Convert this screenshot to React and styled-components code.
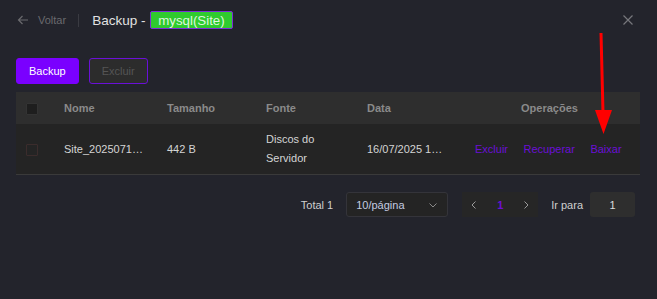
import React from 'react'
import styled, { createGlobalStyle } from 'styled-components';

const GlobalStyle = createGlobalStyle`
  html, body {
    margin: 0;
    padding: 0;
    background: #23242c;
    font-family: "Liberation Sans", Arial, sans-serif;
  }
`;

const rows = [
  {
    name: 'Site_20250716_153012.sql.gz',
    size: '442 B',
    source: 'Discos do Servidor',
    date: '16/07/2025 15:30:12',
  },
];

export default function App() {
  return (
    <Page>
      <GlobalStyle />
      <Header>
        <Back>
          <svg width="12" height="12" viewBox="0 0 12 12" fill="none" stroke="currentColor" strokeWidth="1.2">
            <path d="M11 6H1.5M5.5 2 1.5 6l4 4" />
          </svg>
          Voltar
        </Back>
        <Divider />
        <Title>Backup - </Title>
        <Tag>mysql(Site)</Tag>
        <Close>
          <svg width="10" height="10" viewBox="0 0 10 10" stroke="currentColor" strokeWidth="1.2">
            <path d="M0.5 0.5l9 9M9.5 0.5l-9 9" />
          </svg>
        </Close>
      </Header>

      <Toolbar>
        <Button $primary>Backup</Button>
        <Button>Excluir</Button>
      </Toolbar>

      <Table>
        <colgroup>
          <col style={{ width: 32 }} />
          <col style={{ width: 103 }} />
          <col style={{ width: 99 }} />
          <col style={{ width: 101 }} />
          <col style={{ width: 108 }} />
          <col style={{ width: 181 }} />
        </colgroup>
        <thead>
          <tr>
            <Th $check><Check $head /></Th>
            <Th>Nome</Th>
            <Th>Tamanho</Th>
            <Th>Fonte</Th>
            <Th>Data</Th>
            <Th $center>Operações</Th>
          </tr>
        </thead>
        <tbody>
          {rows.map((r) => (
            <tr key={r.name}>
              <Td $check><Check /></Td>
              <Td $ellipsis $pr={6}>{r.name}</Td>
              <Td>{r.size}</Td>
              <Td>{r.source}</Td>
              <Td $ellipsis>{r.date}</Td>
              <Td>
                <Ops>
                  <OpLink>Excluir</OpLink>
                  <OpLink>Recuperar</OpLink>
                  <OpLink>Baixar</OpLink>
                </Ops>
              </Td>
            </tr>
          ))}
        </tbody>
      </Table>

      <Pagination>
        <Label>Total 1</Label>
        <Select>
          10/página
          <svg width="10" height="10" viewBox="0 0 10 10" fill="none" stroke="currentColor" strokeWidth="1">
            <path d="M1.5 3.5 5 7l3.5-3.5" />
          </svg>
        </Select>
        <Pager>
          <PagerBtn>
            <svg width="8" height="10" viewBox="0 0 8 10" fill="none" stroke="currentColor" strokeWidth="1">
              <path d="M5.5 1.5 2 5l3.5 3.5" />
            </svg>
          </PagerBtn>
          <PageNum>1</PageNum>
          <PagerBtn>
            <svg width="8" height="10" viewBox="0 0 8 10" fill="none" stroke="currentColor" strokeWidth="1">
              <path d="M2.5 1.5 6 5 2.5 8.5" />
            </svg>
          </PagerBtn>
        </Pager>
        <Label $gap={7}>Ir para</Label>
        <JumpInput>1</JumpInput>
      </Pagination>

      <Annotation width="20" height="110" viewBox="0 0 20 110">
        <path d="M7 2 L9 82" stroke="#ff0000" strokeWidth="3" />
        <path d="M1 79 L18 79 L9.5 103 Z" fill="#ff0000" />
      </Annotation>
    </Page>
  )
}

const Page = styled.div`
  position: relative;
  width: 657px;
  height: 299px;
  box-sizing: border-box;
  padding: 0 17px 0 16px;
  background: #23242c;
  font-size: 11px;
`;

const Header = styled.div`
  display: flex;
  align-items: center;
  height: 40px;
`;

const Back = styled.div`
  display: flex;
  align-items: center;
  gap: 9px;
  color: #6a6a6e;
  font-size: 11px;
  margin-left: 1px;
  margin-top: -1px;
`;

const Divider = styled.div`
  width: 1px;
  height: 13px;
  background: #3a3b42;
  margin: 0 13px 0 12px;
`;

const Title = styled.span`
  color: #e2e2e2;
  font-size: 13.5px;
  white-space: pre;
  margin-right: 1px;
`;

const Tag = styled.span`
  display: inline-flex;
  align-items: center;
  height: 16px;
  padding: 0 7px;
  background: #2fcb2f;
  border: 1px solid #7a2fd6;
  border-radius: 2px;
  color: #dff7df;
  font-size: 13.3px;
`;

const Close = styled.div`
  margin-left: auto;
  display: flex;
  color: #76777c;
  margin-right: 7px;
`;

const Toolbar = styled.div`
  display: flex;
  gap: 10px;
  margin-top: 18px;
`;

const Button = styled.button`
  height: 26px;
  padding: 0 12px;
  border-radius: 3px;
  font-family: inherit;
  font-size: 11px;
  border: 1px solid ${(p) => (p.$primary ? '#7a00ff' : '#6a10d8')};
  background: ${(p) => (p.$primary ? '#7a00ff' : '#2c2c2c')};
  color: ${(p) => (p.$primary ? '#ffffff' : '#555555')};
`;

const Table = styled.table`
  width: 624px;
  margin-top: 8px;
  border-collapse: collapse;
  table-layout: fixed;
  font-size: 11px;
`;

const Th = styled.th`
  height: 32px;
  padding: 0 ${(p) => (p.$check ? '0' : '16px')};
  background: #2e2e2e;
  color: #8a8a8a;
  font-weight: bold;
  text-align: ${(p) => (p.$check || p.$center ? 'center' : 'left')};
`;

const Td = styled.td`
  height: 50px;
  padding: 0 ${(p) => (p.$check ? 0 : p.$pr ?? 16)}px 0 ${(p) => (p.$check ? 0 : 16)}px;
  background: #242424;
  border-bottom: 1px solid #3a3a3a;
  color: #d4d4d4;
  line-height: 19px;
  text-align: ${(p) => (p.$check ? 'center' : 'left')};
  white-space: ${(p) => (p.$ellipsis ? 'nowrap' : 'normal')};
  overflow: hidden;
  text-overflow: ellipsis;
`;

const Check = styled.span`
  display: inline-block;
  vertical-align: middle;
  width: 10px;
  height: 10px;
  border: 1px solid ${(p) => (p.$head ? '#333' : '#3b2c2c')};
  background: ${(p) => (p.$head ? '#1e1e1e' : 'transparent')};
  border-radius: 1px;
`;

const Ops = styled.div`
  display: flex;
  gap: 15.5px;
`;

const OpLink = styled.span`
  color: #6b0fd6;
  cursor: pointer;
`;

const Pagination = styled.div`
  display: flex;
  align-items: center;
  justify-content: flex-end;
  margin-top: 17px;
  margin-right: 5px;
`;

const Label = styled.span`
  color: #cfcfcf;
  margin-right: ${(p) => p.$gap ?? 13}px;
`;

const Select = styled.div`
  display: flex;
  align-items: center;
  justify-content: space-between;
  box-sizing: border-box;
  width: 102px;
  height: 25px;
  padding: 0 9px 0 9px;
  border: 1px solid #34343a;
  border-radius: 3px;
  background: #242424;
  color: #c3cbe0;
  margin-right: 14px;
  svg { color: #8a8a8a; }
`;

const Pager = styled.div`
  display: flex;
  align-items: center;
  height: 25px;
  background: #262626;
  margin-right: 13px;
`;

const PagerBtn = styled.div`
  display: flex;
  align-items: center;
  justify-content: center;
  width: 24px;
  color: #9a9a9a;
`;

const PageNum = styled.div`
  width: 28px;
  text-align: center;
  color: #6b0fd6;
  font-weight: bold;
`;

const JumpInput = styled.div`
  display: flex;
  align-items: center;
  justify-content: center;
  width: 45px;
  height: 25px;
  background: #2e2e2e;
  border-radius: 3px;
  color: #dcdcdc;
`;

const Annotation = styled.svg`
  position: absolute;
  left: 594px;
  top: 31px;
`;
